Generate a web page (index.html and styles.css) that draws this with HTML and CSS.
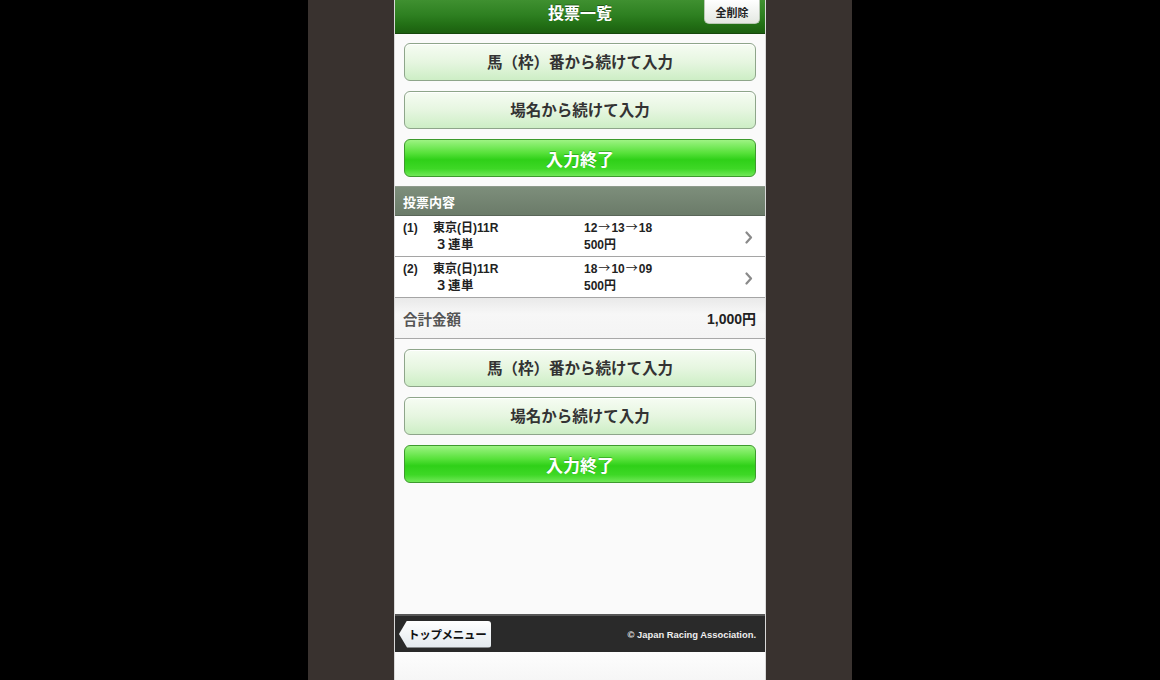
FILE: index.html
```html
<!DOCTYPE html>
<html lang="ja">
<head>
<meta charset="utf-8">
<link rel="stylesheet" href="styles.css">
</head>
<body>
<div class="stage">
  <div class="panel">
    <div class="phone">
      <header class="topbar">
        <h1 class="title">投票一覧</h1>
        <button class="clear-btn">全削除</button>
      </header>

      <div class="btn-group">
        <div class="btn light">馬（枠）番から続けて入力</div>
        <div class="btn light">場名から続けて入力</div>
        <div class="btn green">入力終了</div>
      </div>

      <div class="section-head">投票内容</div>

      <div class="bet-row">
        <div class="no">(1)</div>
        <div class="race">
          <div>東京(日)11R</div>
          <div class="kind">３連単</div>
        </div>
        <div class="combo">
          <div>12<span class="arr">→</span>13<span class="arr">→</span>18</div>
          <div>500円</div>
        </div>
        <svg class="chev" width="8" height="13" viewBox="0 0 8 13"><path d="M1.5 1.5 L6 6.5 L1.5 11.5" fill="none" stroke="#8a8a8a" stroke-width="2.2" stroke-linecap="round" stroke-linejoin="round"/></svg>
      </div>
      <div class="bet-row">
        <div class="no">(2)</div>
        <div class="race">
          <div>東京(日)11R</div>
          <div class="kind">３連単</div>
        </div>
        <div class="combo">
          <div>18<span class="arr">→</span>10<span class="arr">→</span>09</div>
          <div>500円</div>
        </div>
        <svg class="chev" width="8" height="13" viewBox="0 0 8 13"><path d="M1.5 1.5 L6 6.5 L1.5 11.5" fill="none" stroke="#8a8a8a" stroke-width="2.2" stroke-linecap="round" stroke-linejoin="round"/></svg>
      </div>

      <div class="total-row">
        <span>合計金額</span>
        <span class="amount">1,000円</span>
      </div>

      <div class="btn-group second">
        <div class="btn light">馬（枠）番から続けて入力</div>
        <div class="btn light">場名から続けて入力</div>
        <div class="btn green">入力終了</div>
      </div>

      <div class="spacer"></div>

      <footer class="footer">
        <div class="back-btn">トップメニュー</div>
        <div class="copy">© Japan Racing Association.</div>
      </footer>

      <div class="below"></div>
    </div>
  </div>
</div>
</body>
</html>
```

FILE: styles.css
```css
* { box-sizing: border-box; }
html, body {
  margin: 0;
  padding: 0;
  background: #000;
  height: 680px;
  overflow: hidden;
  font-family: "Noto Sans CJK JP", "Noto Sans", "Liberation Sans", sans-serif;
}
.stage {
  display: flex;
  justify-content: center;
  height: 680px;
}
.panel {
  width: 544px;
  background: #39322f;
  display: flex;
  justify-content: center;
}
.phone {
  width: 372px;
  height: 680px;
  background: #fafafa;
  display: flex;
  flex-direction: column;
  overflow: hidden;
  border-left: 1px solid #d8d8d8;
  border-right: 1px solid #d8d8d8;
}
.topbar {
  height: 34px;
  flex: none;
  background: linear-gradient(#3f9030 0%, #2e8021 45%, #226f15 75%, #1c5f10 100%);
  border-bottom: 1px solid #16470c;
  display: flex;
  align-items: center;
  justify-content: center;
  position: relative;
}
.title {
  margin: 0;
  color: #fff;
  font-size: 16px;
  font-weight: 700;
  line-height: 1;
  margin-top: -9px;
  text-shadow: 0 -1px 0 rgba(0,0,0,0.35);
}
.clear-btn {
  position: absolute;
  right: 5px;
  top: 0;
  width: 56px;
  height: 24px;
  border: 1px solid #b9c9b4;
  border-top: none;
  border-radius: 0 0 5px 5px;
  background: linear-gradient(#ffffff, #e4e8e2);
  font-family: inherit;
  font-size: 11px;
  font-weight: 700;
  color: #222;
  padding: 0;
}
.btn-group {
  flex: none;
  display: flex;
  flex-direction: column;
  gap: 10px;
  padding: 9px 9px 9px;
}
.btn-group.second {
  padding-top: 10px;
}
.btn {
  height: 38px;
  border-radius: 6px;
  display: flex;
  align-items: center;
  justify-content: center;
  font-weight: 700;
  font-size: 15.5px;
  line-height: 1;
}
.btn.light {
  color: #333;
  background: linear-gradient(#f6fcf3 0%, #e6f6e0 50%, #cdeec5 100%);
  border: 1px solid #8ea58a;
  box-shadow: inset 0 1px 0 #fff;
}
.btn.green {
  color: #fff;
  font-size: 17px;
  background: linear-gradient(#9df383 0%, #59e23c 35%, #2fd018 55%, #3ed826 80%, #70e857 100%);
  border: 1px solid #3d9a2d;
  text-shadow: 0 -1px 0 rgba(0,80,0,0.35);
}
.section-head {
  flex: none;
  height: 30px;
  background: linear-gradient(#7d8e7b, #6b7b69);
  border-top: 1px solid #8e9a8c;
  border-bottom: 1px solid #5a6659;
  color: #fff;
  font-size: 13px;
  font-weight: 700;
  padding-left: 8px;
  display: flex;
  align-items: center;
}
.bet-row {
  flex: none;
  height: 41px;
  background: #fff;
  border-bottom: 1.5px solid #a5a5a5;
  display: flex;
  align-items: center;
  padding: 0 12px 0 8px;
  font-family: "Liberation Sans", "Noto Sans CJK JP", sans-serif;
  font-size: 12px;
  font-weight: 700;
  color: #222;
  line-height: 17px;
}
.bet-row .no,
.bet-row .race,
.bet-row .combo {
  align-self: flex-start;
  padding-top: 4px;
}
.bet-row .no { width: 30px; }
.bet-row .race { width: 151px; }
.bet-row .combo { flex: 1; }
.bet-row .race .kind {
  padding-left: 2px;
  font-size: 12.5px;
  letter-spacing: 0.5px;
}
.arr {
  font-family: "Noto Sans CJK JP", sans-serif;
  font-weight: 400;
  line-height: 0;
  margin: 0 1px;
}
.chev { flex: none; margin-top: 2px; }
.total-row {
  flex: none;
  height: 41px;
  background: linear-gradient(#e9e9e9, #f7f7f7 40%, #f4f4f4);
  border-bottom: 1.5px solid #a8a8a8;
  display: flex;
  align-items: center;
  justify-content: space-between;
  padding: 0 9px 0 8px;
  font-size: 14.5px;
  font-weight: 700;
  color: #555;
}
.total-row .amount {
  font-family: "Liberation Sans", "Noto Sans CJK JP", sans-serif;
  color: #222;
  font-size: 14px;
}
.spacer {
  flex: 1;
  background: #fafafa;
}
.footer {
  flex: none;
  height: 38px;
  background: #2a2a2a;
  border-top: 2px solid #575757;
  display: flex;
  align-items: center;
  justify-content: space-between;
  padding: 0 9px 0 4px;
}
.back-btn {
  height: 27px;
  width: 92px;
  background: linear-gradient(#ffffff, #e3e9ee);
  border-radius: 3px;
  clip-path: polygon(8px 0, 100% 0, 100% 100%, 8px 100%, 0 50%);
  color: #111;
  font-size: 11.5px;
  font-weight: 700;
  display: flex;
  align-items: center;
  padding-left: 9px;
  white-space: nowrap;
  letter-spacing: -0.3px;
}
.copy {
  color: #eee;
  font-family: "Liberation Sans", Arial, sans-serif;
  font-size: 9.4px;
  font-weight: 700;
}
.below {
  flex: none;
  height: 28px;
  background: linear-gradient(#fdfdfd, #f6f6f6);
}
```
